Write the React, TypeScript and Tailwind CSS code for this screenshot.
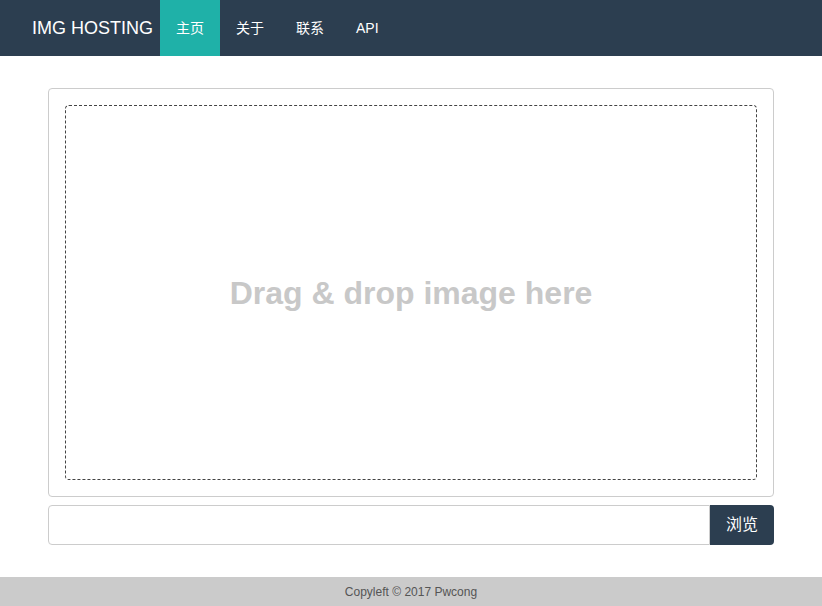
export default function App() {
  const navItems = ["主页", "关于", "联系", "API"];

  return (
    <div
      className="min-h-[606px] flex flex-col bg-white"
      style={{ fontFamily: '"Liberation Sans", Arial, "Noto Sans CJK SC", sans-serif' }}
    >
      {/* Navbar */}
      <nav className="h-[56px] bg-[#2c3e50] flex items-stretch pl-[32px]">
        <span className="flex items-center text-white text-[18px] pr-[7px]">IMG HOSTING</span>
        <ul className="flex items-stretch">
          {navItems.map((item, i) => (
            <li
              key={item}
              className={
                i === 0
                  ? "flex items-center px-[16px] text-[14px] text-white bg-[#1fb1a8]"
                  : "flex items-center px-[16px] text-[14px] text-white"
              }
            >
              {item}
            </li>
          ))}
        </ul>
      </nav>

      {/* Upload area */}
      <main className="w-[726px] mx-auto mt-[32px]">
        <div className="border border-[#cccccc] rounded-[4px] p-[16px]">
          <div className="h-[375px] border border-dashed border-[#444] rounded-[4px] flex items-center justify-center">
            <span className="text-[32px] font-bold text-[#c8c8c8]">Drag &amp; drop image here</span>
          </div>
        </div>

        <div className="flex mt-[8px] h-[40px]">
          <input
            type="text"
            className="flex-1 border border-[#cccccc] rounded-l-[4px] outline-none px-3"
          />
          <button className="w-[64px] bg-[#2c3e50] text-white text-[16px] rounded-r-[4px]">浏览</button>
        </div>
      </main>

      <footer className="mt-auto h-[29px] bg-[#cbcbcb] flex items-center justify-center pt-[1px] text-[12px] text-[#555]">
        Copyleft © 2017 Pwcong
      </footer>
    </div>
  );
}
